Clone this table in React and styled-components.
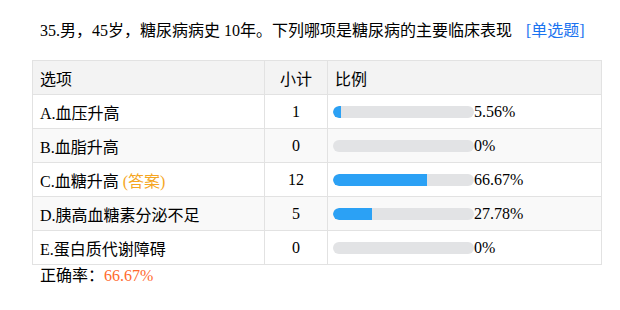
import React from "react";
import styled, { createGlobalStyle } from "styled-components";

const GlobalStyle = createGlobalStyle`
  body {
    margin: 0;
    background: #fff;
    font-family: "Liberation Serif", "Noto Sans CJK SC", serif;
    font-size: 16px;
    color: #000;
  }
`;

const Wrapper = styled.div`
  padding: 21px 0 0 32px;
  width: 570px;
`;

const Title = styled.div`
  padding-left: 8px;
  height: 20px;
  line-height: 20px;
  margin-bottom: 19px;
  white-space: nowrap;
`;

const Tag = styled.span`
  color: #1a73f0;
  margin-left: 14px;
`;

const Table = styled.table`
  width: 570px;
  border-collapse: collapse;
  table-layout: fixed;
`;

const Row = styled.tr`
  background: ${(p) => (p.$head ? "#f3f3f3" : p.$alt ? "#f9f9f9" : "#fff")};
`;

const Cell = styled.td`
  border: 1px solid #e2e2e2;
  height: 33px;
  padding: 0 0 0 ${(p) => (p.$bar ? "5px" : "7px")};
  ${(p) => p.$center && "padding: 0; text-align: center;"}
  vertical-align: middle;
  white-space: nowrap;
`;

const Answer = styled.span`
  color: #f5a623;
`;

const BarRow = styled.div`
  display: flex;
  align-items: center;
`;

const Track = styled.div`
  width: 141px;
  height: 12px;
  border-radius: 6px;
  background: #e2e3e5;
  overflow: hidden;
`;

const Fill = styled.div`
  height: 100%;
  background: #2ba1f5;
  border-radius: 6px 0 0 6px;
`;

const Footer = styled.div`
  padding-left: 8px;
  margin-top: 1px;
  line-height: 19px;
`;

const Rate = styled.span`
  color: #ff6a2e;
`;

const rows = [
  { label: "A.血压升高", count: 1, pct: 5.56 },
  { label: "B.血脂升高", count: 0, pct: 0 },
  { label: "C.血糖升高", count: 12, pct: 66.67, answer: true },
  { label: "D.胰高血糖素分泌不足", count: 5, pct: 27.78 },
  { label: "E.蛋白质代谢障碍", count: 0, pct: 0 },
];

const App = () => (
  <Wrapper>
    <GlobalStyle />
    <Title>
      35.男，45岁，糖尿病病史 10年。下列哪项是糖尿病的主要临床表现
      <Tag>[单选题]</Tag>
    </Title>
    <Table>
      <colgroup>
        <col style={{ width: 232 }} />
        <col style={{ width: 63 }} />
        <col />
      </colgroup>
      <tbody>
        <Row $head>
          <Cell>选项</Cell>
          <Cell $center>小计</Cell>
          <Cell>比例</Cell>
        </Row>
        {rows.map((r, i) => (
          <Row key={r.label} $alt={i % 2 === 1}>
            <Cell>
              {r.label}
              {r.answer && <Answer> (答案)</Answer>}
            </Cell>
            <Cell $center>{r.count}</Cell>
            <Cell $bar>
              <BarRow>
                <Track>
                  <Fill style={{ width: `${r.pct}%` }} />
                </Track>
                {r.pct}%
              </BarRow>
            </Cell>
          </Row>
        ))}
      </tbody>
    </Table>
    <Footer>
      正确率：<Rate>66.67%</Rate>
    </Footer>
  </Wrapper>
);

export default App;
